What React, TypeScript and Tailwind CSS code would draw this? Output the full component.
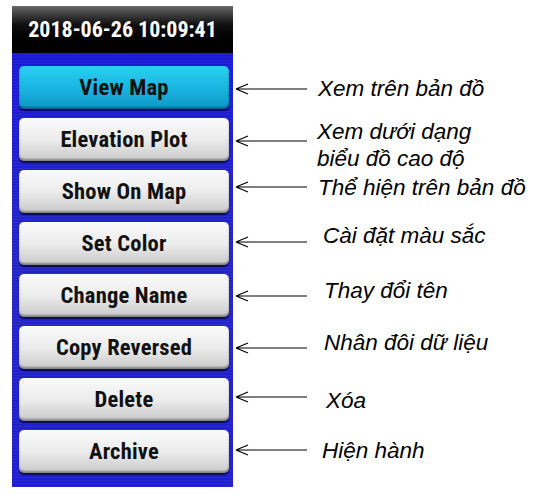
const buttons = [
  { label: "View Map", active: true },
  { label: "Elevation Plot" },
  { label: "Show On Map" },
  { label: "Set Color" },
  { label: "Change Name" },
  { label: "Copy Reversed" },
  { label: "Delete" },
  { label: "Archive" },
];

const notes = [
  { lines: ["Xem trên bản đồ"], cls: "ml-[11px] mt-[2px]" },
  { lines: ["Xem dưới dạng", "biểu đồ cao độ"], cls: "ml-[10px] mt-[10px]" },
  { lines: ["Thể hiện trên bản đồ"], cls: "ml-[11px] mb-[8px]" },
  { lines: ["Cài đặt màu sắc"], cls: "ml-[16px] mb-[16px]" },
  { lines: ["Thay đổi tên"], cls: "ml-[17px] mb-[10px]" },
  { lines: ["Nhân đôi dữ liệu"], cls: "ml-[17px] mb-[10px]" },
  { lines: ["Xóa"], cls: "ml-[19px] mt-[1px]" },
  { lines: ["Hiện hành"], cls: "ml-[15px] mb-[2px]" },
];

const Arrow = ({ shift }: { shift: string }) => (
  <svg width="72" height="12" viewBox="0 0 72 12" className={`shrink-0 ${shift}`}>
    <path d="M1 6 H72 M1 6 L13 1 M1 6 L13 11" stroke="#000" strokeWidth="1.2" fill="none" />
  </svg>
);

const arrowShift = ["mt-[3px]", "mt-[3px]", "mb-[9px]", "mb-[3px]", "mt-[1px]", "", "mb-[5px]", "mb-[3px]"];

const App = () => {
  return (
    <div className="flex h-[500px] w-[540px] bg-white pl-[12px] pt-[6px]">
      <div className="flex h-[481px] w-[221px] flex-col">
        <div className="flex h-[47px] items-center justify-center bg-gradient-to-b from-[#6a6a6a] via-[#101010] via-40% to-black">
          <span className="whitespace-nowrap font-['Roboto_Condensed',sans-serif] text-[22px] font-bold text-white">
            2018-06-26 10:09:41
          </span>
        </div>
        <div className="flex flex-1 flex-col gap-[9px] bg-[repeating-linear-gradient(0deg,rgba(255,255,255,0.05)_0px,rgba(255,255,255,0.05)_1px,transparent_1px,transparent_3px),linear-gradient(180deg,#1a1ad6_0%,#2424c4_50%,#1e1ecf_100%)] pl-[7px] pr-[4px] pt-[13px]">
          {buttons.map((b, i) => (
            <div
              key={i}
              className={
                b.active
                  ? "flex h-[43px] items-center justify-center rounded-[5px] bg-gradient-to-b from-[#2ad0f2] via-[#19b6e2] to-[#0f96c4] shadow-[0_2px_1px_#050560,inset_0_-2px_2px_rgba(0,40,80,0.45)]"
                  : "flex h-[43px] items-center justify-center rounded-[5px] bg-gradient-to-b from-[#fafafa] via-[#ececec] to-[#c9c9c9] shadow-[0_2px_1px_#0a0a55,inset_0_-2px_2px_rgba(0,0,0,0.35)]"
              }
            >
              <span className="whitespace-nowrap font-['Roboto_Condensed',sans-serif] text-[22.5px] font-bold tracking-[0.2px] text-[#111]">
                {b.label}
              </span>
            </div>
          ))}
        </div>
      </div>
      <div className="ml-[2px] mt-[60px] flex flex-col gap-[9px]">
        {notes.map((n, i) => (
          <div key={i} className="flex h-[43px] items-center">
            <Arrow shift={arrowShift[i]} />
            <div className={`font-['Liberation_Sans',Arial,sans-serif] text-[22.5px] italic leading-[27px] text-black ${n.cls}`}>
              {n.lines.map((l, j) => (
                <div key={j} className="whitespace-nowrap">{l}</div>
              ))}
            </div>
          </div>
        ))}
      </div>
    </div>
  );
};

export default App;
